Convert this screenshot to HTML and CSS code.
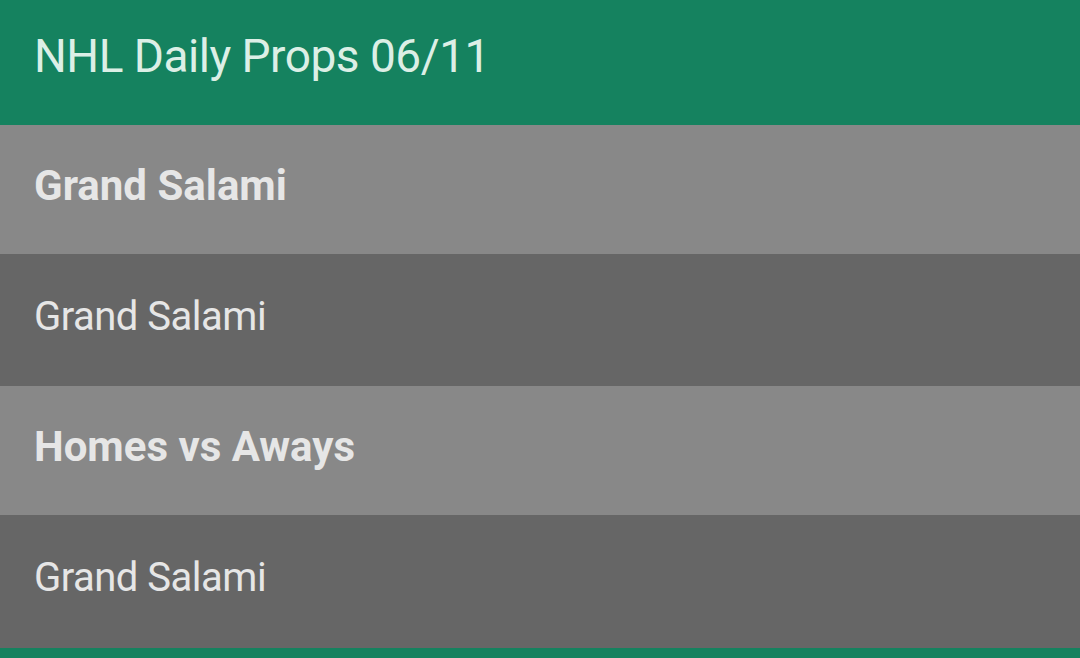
FILE: index.html
```html
<!DOCTYPE html>
<html lang="en">
<head>
    <meta charset="UTF-8">
    <meta name="viewport" content="width=device-width, initial-scale=1.0">
    <title>NHL Daily Props</title>
    <link rel="stylesheet" href="styles.css">
</head>
<body>
    <div class="page">
        <div class="header">NHL Daily Props 06/11</div>

        <div class="group">Grand Salami</div>
        <div class="item">Grand Salami</div>

        <div class="group">Homes vs Aways</div>
        <div class="item item-last">Grand Salami</div>

        <div class="footer"></div>
    </div>
</body>
</html>
```

FILE: styles.css
```css
body {
    margin: 0;
    font-family: Roboto, "Noto Sans", sans-serif;
    background-color: #666666;
}

.page {
    display: flex;
    flex-direction: column;
    height: 658px;
    overflow: hidden;
}

.header {
    height: 125px;
    display: flex;
    align-items: center;
    padding-left: 34px;
    padding-bottom: 14px;
    box-sizing: border-box;
    background-color: #15825f;
    color: #dcefe6;
    font-size: 46px;
    letter-spacing: -0.5px;
}

.group,
.item {
    display: flex;
    align-items: center;
    padding-left: 34px;
    box-sizing: border-box;
    color: #e6e6e6;
}

.group {
    height: 129px;
    background-color: #888888;
    font-weight: bold;
    font-size: 42px;
    padding-bottom: 8px;
}

.item {
    height: 132px;
    background-color: #666666;
    font-size: 40px;
    letter-spacing: -0.5px;
    padding-bottom: 8px;
}

.item-last {
    height: 133px;
}

.footer {
    flex: 1;
    background-color: #15825f;
}
```
